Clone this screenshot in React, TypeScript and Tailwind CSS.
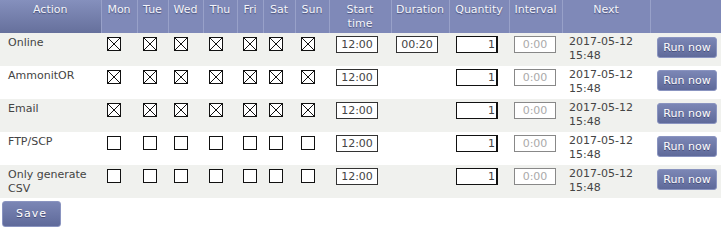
import React from 'react';

// 排程列資料
interface ScheduleRow {
  action: string;
  days: boolean;
  start: string;
  duration?: string;
  quantity: string;
  interval: string;
  next: [string, string];
}

const ROWS: ScheduleRow[] = [
  { action: 'Online', days: true, start: '12:00', duration: '00:20', quantity: '1', interval: '0:00', next: ['2017-05-12', '15:48'] },
  { action: 'AmmonitOR', days: true, start: '12:00', quantity: '1', interval: '0:00', next: ['2017-05-12', '15:48'] },
  { action: 'Email', days: true, start: '12:00', quantity: '1', interval: '0:00', next: ['2017-05-12', '15:48'] },
  { action: 'FTP/SCP', days: false, start: '12:00', quantity: '1', interval: '0:00', next: ['2017-05-12', '15:48'] },
  { action: 'Only generate CSV', days: false, start: '12:00', quantity: '1', interval: '0:00', next: ['2017-05-12', '15:48'] },
];

const DAYS = ['Mon', 'Tue', 'Wed', 'Thu', 'Fri', 'Sat', 'Sun'];
const DAY_WIDTHS = ['w-[36px]', 'w-[31px]', 'w-[35px]', 'w-[34px]', 'w-[26px]', 'w-[32px]', 'w-[34px]'];

// 勾選框
const Box: React.FC<{ checked: boolean }> = ({ checked }) => (
  <span className="block w-[14px] h-[14px] border border-[#111] bg-white">
    {checked && (
      <svg width="12" height="12" viewBox="0 0 12 12" className="block">
        <path d="M0 0 L12 12 M12 0 L0 12" stroke="#111" strokeWidth="1" />
      </svg>
    )}
  </span>
);

const thBase =
  'align-top font-normal text-[11px] leading-[14px] text-[#f4f5fb] pt-[3px] pb-[2px] border-l border-[#98a1c9] [text-shadow:0_1px_1px_rgba(40,45,80,0.6)]';

const btn =
  'block rounded-[3px] border border-[#8a94c0] bg-gradient-to-b from-[#7b86b5] to-[#5f6a9a] text-white text-[11px] leading-[14px] [text-shadow:0_1px_0_rgba(30,35,70,0.5)]';

export default function App() {
  return (
    <div className="w-[723px] h-[227px] bg-white overflow-hidden font-['DejaVu_Sans',sans-serif] text-[#444]">
      <table className="table-fixed border-collapse w-[721px]">
        <thead>
          <tr className="bg-[#7f89b8] h-[33px]">
            <th className={`${thBase} w-[101px] border-l-0 bg-gradient-to-b from-[#8590bd] to-[#66709c]`}>Action</th>
            {DAYS.map((d, i) => (
              <th key={d} className={`${thBase} ${DAY_WIDTHS[i]}`}>{d}</th>
            ))}
            <th className={`${thBase} w-[62px]`}>Start<br />time</th>
            <th className={`${thBase} w-[58px]`}>Duration</th>
            <th className={`${thBase} w-[60px]`}>Quantity</th>
            <th className={`${thBase} w-[53px]`}>Interval</th>
            <th className={`${thBase} w-[88px]`}>Next</th>
            <th className={`${thBase} w-[71px]`}></th>
          </tr>
        </thead>
        <tbody>
          {ROWS.map((r, idx) => (
            <tr key={r.action} className={`h-[33px] ${idx % 2 === 0 ? 'bg-[#f0f1ee]' : 'bg-white'}`}>
              <td className="align-top pl-[8px] pt-[3px] text-[11px] leading-[14px]">{r.action}</td>
              {DAYS.map((d) => (
                <td key={d} className="align-top pl-[6px] pt-[4px]">
                  <Box checked={r.days} />
                </td>
              ))}
              <td className="align-top pl-[7px] pt-[3px]">
                <div className="w-[42px] h-[17px] border border-[#333] bg-white text-[11px] leading-[15px] text-center">{r.start}</div>
              </td>
              <td className="align-top pl-[5px] pt-[3px]">
                {r.duration && (
                  <div className="w-[42px] h-[17px] border border-[#333] bg-white text-[11px] leading-[15px] text-center">{r.duration}</div>
                )}
              </td>
              <td className="align-top pl-[7px] pt-[3px]">
                <div className="w-[42px] h-[17px] border border-[#111] border-r-2 bg-white text-[11px] leading-[15px] text-right pr-[1px]">{r.quantity}</div>
              </td>
              <td className="align-top pl-[5px] pt-[3px]">
                <div className="w-[42px] h-[17px] border border-[#888] bg-white text-[11px] leading-[15px] text-center text-[#aaa]">{r.interval}</div>
              </td>
              <td className="align-top pl-[7px] pt-[2px] text-[11px] leading-[14px]">
                {r.next[0]}
                <br />
                {r.next[1]}
              </td>
              <td className="align-top pl-[7px] pt-[4px]">
                <button className={`${btn} w-[60px] h-[21px]`}>Run now</button>
              </td>
            </tr>
          ))}
        </tbody>
      </table>
      <div className="pl-[2px] pt-[3px]">
        <button className={`${btn} w-[59px] h-[26px] tracking-[1px]`}>Save</button>
      </div>
    </div>
  );
}
